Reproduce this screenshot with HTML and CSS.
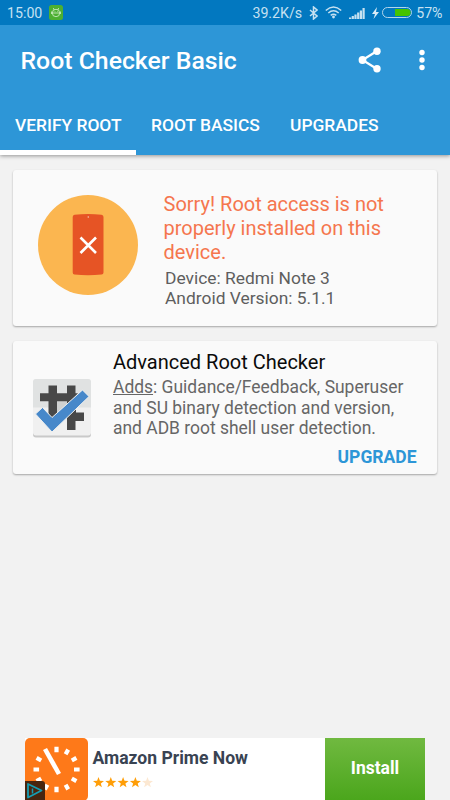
FILE: index.html
```html
<!DOCTYPE html>
<html lang="en">
<head>
<meta charset="utf-8">
<title>Root Checker Basic</title>
<link rel="stylesheet" href="styles.css">
</head>
<body>
<header class="header">
  <div class="status">
    <span class="clock">15:00</span>
    <svg class="notice" width="14" height="15" viewBox="0 0 14 15"><rect width="14" height="15" rx="2.5" fill="#4caf32"/><g fill="none" stroke="#d5efcb" stroke-width=".8"><circle cx="7" cy="8" r="3.7"/><path d="M3.3 8h7.4M4.3 3l1 2M9.7 3l-1 2M2.5 6.5v2.5M11.5 6.5v2.5M5.7 6.5h.6M8 6.5h.6"/></g></svg>
    <div class="indicators">
      <span class="speed">39.2K/s</span>
      <svg class="bt" width="9" height="14" viewBox="0 0 9 14"><path d="M1 4l7 6-3.5 3V1L8 4l-7 6" fill="none" stroke="#c6e1f1" stroke-width="1.5"/></svg>
      <svg class="wifi" width="17" height="13" viewBox="0 0 17 13"><g fill="none" stroke="#c6e1f1" stroke-width="1.5"><path d="M.8 4.5Q8.500-2.500 16.200 4.500M3.300 7Q8.500 2.500 13.700 7M5.700 9.400Q8.500 7.200 11.300 9.400"/></g><circle cx="8.500" cy="11" r="1.400" fill="#c6e1f1"/></svg>
      <svg class="signal" width="16" height="11" viewBox="0 0 16 11"><path d="M0 9.500h2.200V11H0zM2.700 8h2.200v3h-2.200zM5.400 6.500h2.200V11h-2.200zM8.100 4.500h2.200V11h-2.200zM10.800 2.500h2.200V11h-2.200zM13.500 0h2.200v11h-2.200z" fill="#c6e1f1"/></svg>
      <svg class="bolt" width="7" height="12" viewBox="0 0 7 12"><path d="M5 0L0 7h3L1.500 12 7 5H4z" fill="#d8ebf6"/></svg>
      <svg class="battery" width="30" height="11" viewBox="0 0 30 11"><rect x=".5" y=".5" width="29" height="10" rx="5" fill="none" stroke="#b2d5ea"/><path d="M13 2h12a3.500 3.500 0 0 1 0 7H13z" fill="#45c300"/></svg>
      <span class="percent">57%</span>
    </div>
  </div>
  <div class="toolbar">
    <h1 class="title">Root Checker Basic</h1>
    <svg class="share" width="24" height="26" viewBox="0 0 24 26"><path d="M19 4L4.500 13 19 22" fill="none" stroke="#fff" stroke-width="2.200"/><g fill="#fff"><circle cx="19" cy="4.200" r="3.700"/><circle cx="4.500" cy="13" r="3.900"/><circle cx="19" cy="21.800" r="3.700"/></g></svg>
    <svg class="more" width="6" height="22" viewBox="0 0 6 22"><g fill="#fff"><circle cx="3" cy="3.500" r="2.700"/><circle cx="3" cy="11" r="2.700"/><circle cx="3" cy="18.500" r="2.700"/></g></svg>
  </div>
  <nav class="tabs">
    <a class="tab active">VERIFY ROOT</a>
    <a class="tab basics">ROOT BASICS</a>
    <a class="tab upgrades">UPGRADES</a>
  </nav>
</header>
<main class="content">
  <section class="card result">
    <svg class="phone" width="100" height="100" viewBox="0 0 100 100"><circle cx="50" cy="50" r="50" fill="#fbb650"/><path d="M36.500 19.800Q50 18.300 63.500 19.800Q65.500 20 65.500 22V77.500Q65.500 79.300 63.500 79.600Q50 80.800 36.500 79.600Q34.700 79.300 34.700 77.500V22Q34.700 20 36.500 19.800z" fill="#e65425"/><circle cx="50.300" cy="22" r=".8" fill="#f7c7b5"/><path d="M42.500 42.500l15.500 15.500M58 42.500L42.500 58" stroke="#fff" stroke-width="2.600"/></svg>
    <div class="result-text">
      <p class="sorry">Sorry! Root access is not<br>properly installed on this<br>device.</p>
      <p class="device">Device: Redmi Note 3<br>Android Version: 5.1.1</p>
    </div>
  </section>
  <section class="card advanced">
    <svg class="hash" width="60" height="60" viewBox="0 0 60 60"><rect x="1" y="2" width="58" height="57.500" rx="3" fill="#c9c9c9"/><rect x="1" y="1" width="58" height="56.500" rx="3" fill="#f0f0f0"/><path d="M4 1h52q3 0 3 3v25.500H1V4q0-3 3-3z" fill="#e0e2e2"/><path d="M16.500 7.500H25v7.800h10V7.500h8.500v7.800H46L25 39l-4.500 2-4-4V23.300H8v-8h8.500zM44 27l-9 9v16h8.500v-9H52v-8.500h-8z" fill="#484848"/><path d="M25 23.300h10v6.200L25 42z" fill="#cfd1d1"/><path d="M3.500 36l7-6.500 9.500 10L50.500 12l6.500 6.500L20 54z" fill="#4788ca" stroke="#f0f1f1" stroke-width="1"/></svg>
    <div class="advanced-text">
      <h2 class="advanced-title">Advanced Root Checker</h2>
      <p class="adds"><u>Adds</u>: Guidance/Feedback, Superuser<br>and SU binary detection and version,<br>and ADB root shell user detection.</p>
      <a class="upgrade">UPGRADE</a>
    </div>
  </section>
</main>
<aside class="ad">
  <svg class="ad-icon" width="63" height="63" viewBox="0 0 63 63"><rect width="63" height="63" rx="5" fill="#fe7919"/><g stroke="#fff" stroke-width="4.200"><path d="M31.500 8.700v5.600M31.500 48.700v5.600M8.500 31.500h5.600M49 31.500h5.600M43.200 11.600l-2.600 4.600M51.400 19.900l-4.600 2.600M51.400 43.100l-4.600-2.600M43.200 51.400l-2.600-4.600M19.800 51.400l2.600-4.600M11.600 43.100l4.600-2.600M11.600 19.900l4.600 2.600"/><path d="M20 11l14 25" stroke-width="4.600"/></g><path d="M0 43h17q3 0 3 3v17H0z" fill="#48250f"/><path d="M3 46v13.500l13.500-7z" fill="none" stroke="#159db3" stroke-width="1.800" stroke-linejoin="round"/><path d="M7.500 50.500v5" stroke="#159db3" stroke-width="1.500"/></svg>
  <div class="ad-info">
    <div class="ad-title">Amazon Prime Now</div>
    <svg class="stars" width="60" height="11" viewBox="0 0 60 11"><defs><path id="star" d="M5.500 0l1.400 3.800 4.100.1-3.200 2.500 1.100 3.900-3.400-2.200-3.400 2.200 1.100-3.900L0 3.900l4.100-.1z"/></defs><g fill="#ff9e08"><use href="#star"/><use href="#star" x="12.300"/><use href="#star" x="24.600"/><use href="#star" x="36.900"/></g><use href="#star" x="49" fill="#fce8d2"/></svg>
  </div>
  <a class="install">Install</a>
</aside>
</body>
</html>
```
FILE: styles.css
```css
* { box-sizing: border-box; }
body {
  margin: 0;
  width: 450px;
  height: 800px;
  overflow: hidden;
  display: flex;
  flex-direction: column;
  background: #f2f2f2;
  font-family: Roboto, sans-serif;
}
h1, h2, p { margin: 0; font-weight: 400; }
svg { display: block; flex: none; }
.header {
  height: 155px;
  flex: none;
  background: #2d96d7;
  box-shadow: 0 1px 4px rgba(0, 0, 0, .4);
}
.status {
  height: 25px;
  display: flex;
  align-items: center;
  padding: 1px 7.5px 0 7px;
  background: #0278c0;
  color: #c6e1f1;
  font-size: 14.2px;
}
.notice { margin: -1px 0 0 7px; }
.indicators { margin-left: auto; display: flex; align-items: center; }
.bt { margin-left: 7px; }
.wifi { margin: -1px 0 0 7px; }
.signal { margin-left: 7px; }
.bolt { margin-left: 7px; }
.battery { margin: -1px 0 0 3px; }
.percent { margin-left: 4px; }
.toolbar {
  height: 70px;
  display: flex;
  align-items: center;
  padding: 0 25px 0 20.5px;
}
.title {
  flex: 1;
  padding-top: 1px;
  color: #fff;
  font-size: 24.8px;
  font-weight: 500;
  white-space: nowrap;
}
.share { margin-right: 37px; }
.tabs { height: 60px; display: flex; }
.tab {
  height: 60px;
  padding-left: 15px;
  line-height: 61px;
  color: #fff;
  font-size: 17.4px;
  font-weight: 500;
  white-space: nowrap;
}
.active { width: 136px; border-bottom: 5px solid #fff; }
.basics { width: 139px; }
.content {
  flex: 1;
  display: flex;
  flex-direction: column;
  gap: 15px;
  padding: 15px 13px;
}
.card {
  display: flex;
  border-radius: 3px;
  background: #fafafa;
  box-shadow: 0 1px 2px rgba(0, 0, 0, .32);
}
.result { height: 156px; padding: 24.5px 0 0 25px; }
.result-text { margin-left: 25.5px; white-space: nowrap; }
.sorry { margin-top: -2.5px; color: #f5764e; font-size: 20px; line-height: 24px; }
.device { margin: 4px 0 0 1.5px; color: #5e5e5e; font-size: 17.4px; line-height: 20.4px; }
.advanced { height: 133px; padding: 8px 20.5px 0 19px; }
.hash { margin-top: 29px; }
.advanced-text { flex: 1; margin-left: 21px; display: flex; flex-direction: column; white-space: nowrap; }
.advanced-title { color: #0b0b0b; font-size: 20px; line-height: 26px; }
.adds { margin-top: 2.3px; color: #666; font-size: 17.45px; line-height: 20.4px; }
.upgrade { margin-top: 8.5px; align-self: flex-end; color: #2d96d7; font-size: 17.5px; font-weight: 700; line-height: 20px; }
.ad {
  flex: none;
  width: 400px;
  height: 62px;
  margin-left: 25px;
  display: flex;
  background: #fff;
}
.ad-info { flex: 1; padding: 9px 0 0 4.5px; }
.ad-title { color: #394352; font-size: 17.55px; font-weight: 700; line-height: 22px; white-space: nowrap; }
.stars { margin-top: 8px; }
.install {
  width: 100px;
  background: linear-gradient(#70b940, #4ba61c);
  color: #fff;
  font-size: 17.5px;
  font-weight: 700;
  line-height: 60px;
  text-align: center;
}
```
